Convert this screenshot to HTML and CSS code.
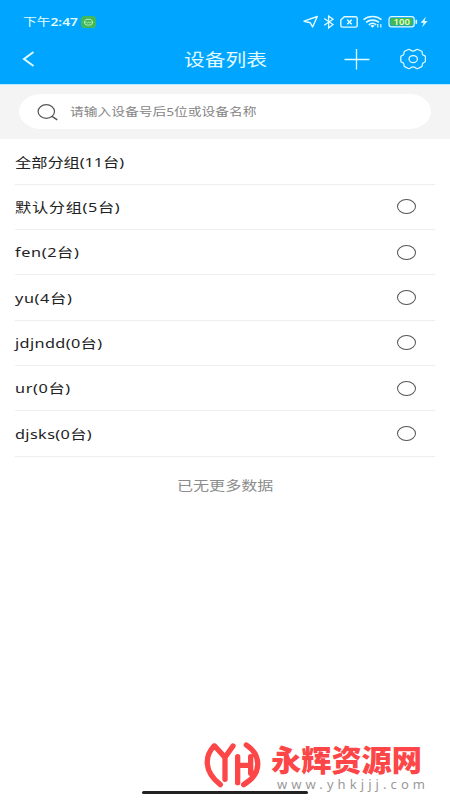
FILE: index.html
```
<!DOCTYPE html>
<html lang="zh-CN">
<head>
<meta charset="utf-8">
<title>设备列表</title>
<link rel="stylesheet" href="styles.css">
</head>
<body>
<main class="screen">
  <header class="header">
    <div class="status">
      <span class="wide time">下午<b>2:47</b></span>
      <svg class="badge" width="15" height="12" viewBox="0 0 15 12"><rect width="15" height="12" rx="3.5" fill="#43b85a"/><path d="M4 5.5V4.8L5 3.4h5l1 1.4v3.4L10 9H5L4 8zM3.4 5.3v2M11.6 5.3v2M5.4 6.2l1 .7 1.2-.7 1.2.7 1-.7" fill="none" stroke="#c9f7c4" stroke-width=".8"/></svg>
      <svg class="indicators" width="128" height="16" viewBox="0 0 128 16" fill="none" stroke="#e2fbff" stroke-width="1.4">
        <path d="M1 7.2 14.3 2.5 9.6 13 7.3 8.8z" stroke-linejoin="round"/>
        <path d="M21.2 4.5 30 10.5 25.6 14V2L30 5.3 21.2 11.2" stroke-width="1.3"/>
        <path d="M41.3 2.7h11.2c1 0 1.7.6 1.7 1.5v7.600c0 .8-.7 1.300-1.700 1.300H39.400c-1 0-1.600-.5-1.600-1.300V6z"/>
        <path d="m44.200 5.800 4.500 4.500m0-4.500-4.500 4.500" stroke-width="1.600"/>
        <path d="M60.500 5.700c5-4.200 13-4.200 18 0M63.100 8.400c3.600-3 9.200-3 12.800 0M65.800 10.800c2.200-1.800 5.200-1.800 7.400 0" stroke-width="1.600"/>
        <path d="m67.200 11.800 2.300-1 2.200 1-2.200 2z" fill="#e2fbff" stroke="none"/>
        <path d="M74.800 10v3.500M77.800 10v3.500" stroke-width="1.200"/>
        <rect x="86" y="2.600" width="25.200" height="10.200" rx="2.600" stroke-width="1.200"/>
        <rect x="87.500" y="4" width="22.200" height="7.400" rx="1.200" fill="#43b84b" stroke="none"/>
        <text x="90.500" y="10.700" textLength="16.500" lengthAdjust="spacingAndGlyphs" class="level">100</text>
        <path d="M113.300 5.800v4" stroke-width="1.600"/>
        <path d="m122.800 2.700-5.200 6h3l-1.500 4.500 5.500-6.300h-3z" fill="#e2fbff" stroke="none"/>
      </svg>
    </div>
    <div class="nav">
      <svg class="back" width="14" height="18" viewBox="0 0 14 18"><path d="M11.500 2 2 9l9.500 7" fill="none" stroke="#e2fbff" stroke-width="2"/></svg>
      <h1 class="title"><span class="wide">设备列表</span></h1>
      <svg class="add" width="26" height="22" viewBox="0 0 26 22"><path d="M.5 11.500h25M12.500 1v20.500" fill="none" stroke="#e2fbff" stroke-width="1.300"/></svg>
      <svg class="gear" width="26" height="22" viewBox="0 0 26 22" fill="none" stroke="#e2fbff" stroke-width="1.250"><path d="M8.300 1.500C9.500 1 10 1.700 11 2.400c1.200.7 3 .7 4.200 0 1-.7 1.500-1.400 2.800-.9l3.700 1.800c1 .6.500 1.500.5 2.300 0 1 1 1.800 2.200 2.100.8.200 1 .7 1 1.300v4c0 .8-.3 1.100-1.100 1.300-1.200.3-2 1.200-2 2.200 0 .7.400 1.500-.6 2.100L18 20.500c-1.300.5-1.800-.2-2.800-.9-1.200-.7-3-.7-4.200 0-1 .7-1.500 1.400-2.700.9l-3.700-1.900c-1-.6-.6-1.400-.6-2.100 0-1-.8-1.900-2-2.200C1.200 14.100.8 13.800.8 13V9c0-.6.300-1.100 1.100-1.300C3.100 7.400 4 6.600 4 5.600c0-.8-.4-1.700.6-2.300z"/><ellipse cx="13.200" cy="11" rx="4.200" ry="3.500"/></svg>
    </div>
  </header>
  <section class="search">
    <div class="field">
      <svg width="22" height="18" viewBox="0 0 22 18" fill="none" stroke="#555"><ellipse cx="9.300" cy="8.500" rx="8.200" ry="6.800" stroke-width="1.200"/><path d="m15 13.300 5.300 3.600" stroke-width="1.400"/></svg>
      <span class="wide hint">请输入设备号后5位或设备名称</span>
    </div>
  </section>
  <ul class="groups">
    <li class="all"><span class="wide">全部分组(11台)</span></li>
    <li><span class="wide">默认分组(5台)</span><i class="radio"></i></li>
    <li><span class="wide">fen(2台)</span><i class="radio"></i></li>
    <li><span class="wide">yu(4台)</span><i class="radio"></i></li>
    <li class="snug"><span class="wide">jdjndd(0台)</span><i class="radio"></i></li>
    <li><span class="wide">ur(0台)</span><i class="radio"></i></li>
    <li class="snug"><span class="wide">djsks(0台)</span><i class="radio"></i></li>
  </ul>
  <p class="end"><span class="wide">已无更多数据</span></p>
  <div class="home"></div>
  <div class="watermark">
    <svg width="60" height="56" viewBox="0 0 180 168" fill="none" stroke="#fc4647" stroke-width="16" stroke-linecap="round" stroke-linejoin="round"><path d="M36 30C10 58 2 104 55 146M38 30l31 34L93 30M69 64v66M107 62v78M107 88h39M146 62v50M133 27C176 55 184 112 125 146"/></svg>
    <svg width="165" height="60" viewBox="0 0 165 60"><text x="9" y="35" textLength="151" lengthAdjust="spacingAndGlyphs" class="name">永辉资源网</text><text x="15" y="53" textLength="148" class="url">www.yhkjjj.com</text></svg>
  </div>
</main>
</body>
</html>
```
FILE: styles.css
```
* { box-sizing: border-box; }
body { margin: 0; background: #fff; font-family: "Noto Sans", "Noto Sans CJK SC", sans-serif; }
.screen { position: relative; width: 450px; height: 800px; overflow: hidden; }
.wide { display: inline-block; transform: scaleX(1.25); transform-origin: left center; white-space: nowrap; }
.header { height: 85px; background: #00a5ff; border-bottom: 1px solid #b5ecff; color: #e2fbff; }
.status { display: flex; align-items: center; height: 36px; padding: 8px 0 0 23px; }
.time { width: 58px; font-size: 11px; line-height: 16px; transform: scaleX(1.25); }
.time b { font-weight: 600; }
.badge { flex: none; }
.indicators { margin-left: 206.5px; flex: none; }
.level { font: 600 8px "Noto Sans", sans-serif; fill: #e2ffd0; stroke: none; }
.nav { display: flex; align-items: center; height: 46px; padding-left: 22px; }
.title { width: 84px; margin: 2px 0 0 148px; font-size: 17px; font-weight: 400; line-height: 24px; }
.title .wide { transform: scaleX(1.22); }
.add { margin-left: 76px; }
.gear { margin-left: 30px; }
.search { height: 54px; padding: 9px 19px; background: #f4f4f4; }
.field { display: flex; align-items: center; height: 35px; padding-left: 18px; background: #fff; border-radius: 22px / 17.5px; }
.hint { margin: 1px 0 0 11px; font-size: 11px; line-height: 18px; color: #858585; }
.groups { margin: 0; padding: .5px 15px 0; list-style: none; }
.groups li { display: flex; align-items: center; justify-content: space-between; height: 45.34px; padding-right: 19px; border-bottom: 1px solid #eee; font-size: 13px; line-height: 20px; letter-spacing: .5px; color: #222; }
.groups .all { letter-spacing: -.05px; }
.groups .snug { letter-spacing: .3px; }
.radio { width: 19px; height: 15px; border: 1px solid #555; border-radius: 50%; }
.end { margin: 19px 0 0 177px; font-size: 13px; line-height: 18px; color: #8c8c8c; }
.end .wide { transform: scaleX(1.235); }
.home { position: absolute; left: 142px; top: 791px; width: 166px; height: 3px; border-radius: 2px; background: #222; }
.watermark { position: absolute; left: 202px; top: 736px; display: flex; }
.name { font: 900 30px "Noto Sans CJK SC", sans-serif; fill: #fc4647; }
.url { font: 13px "Noto Sans", sans-serif; fill: #999; }
```
